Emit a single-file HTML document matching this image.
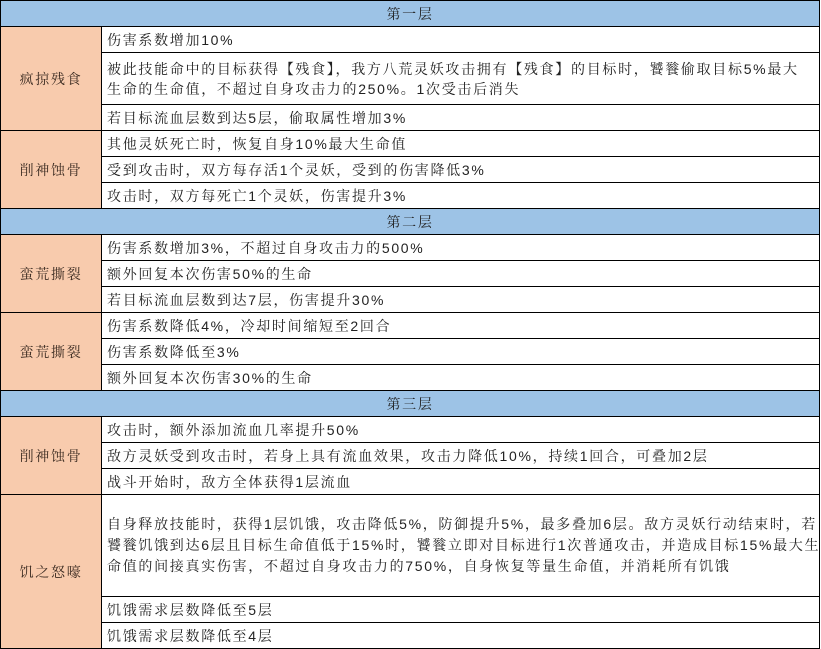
<!DOCTYPE html>
<html><head><meta charset="utf-8"><style>
body{margin:0;background:#fff;width:821px;height:649px;overflow:hidden;}
#t{position:absolute;left:0;top:0;}
.c{position:absolute;box-sizing:border-box;border:1px solid #000;font-family:"Liberation Sans","Noto Serif CJK SC","Noto Sans CJK SC",serif;font-size:14px;color:#222;letter-spacing:1.7px;line-height:20px;display:flex;align-items:center;white-space:nowrap;}
.c span.n{letter-spacing:0;}
.h{background:#9dc3e6;justify-content:center;}
.l{background:#f8cbad;justify-content:center;color:#3a2a20;}
.r{background:#fff;padding-left:5px;}
</style></head><body><div id="t">
<div class="c h" style="left:0;top:0;width:820px;height:27px">第一层</div>
<div class="c l" style="left:0;top:26px;width:102px;height:105px">疯掠残食</div>
<div class="c r" style="left:101px;top:26px;width:719px;height:27px">伤害系数增加10%</div>
<div class="c r" style="left:101px;top:52px;width:719px;height:53px"><div>被此技能命中的目标获得【残食】，我方八荒灵妖攻击拥有【残食】的目标时，饕餮偷取目标5%最大<br>生命的生命值，不超过自身攻击力的250%。1次受击后消失</div></div>
<div class="c r" style="left:101px;top:104px;width:719px;height:27px">若目标流血层数到达5层，偷取属性增加3%</div>
<div class="c l" style="left:0;top:130px;width:102px;height:79px">削神蚀骨</div>
<div class="c r" style="left:101px;top:130px;width:719px;height:27px">其他灵妖死亡时，恢复自身10%最大生命值</div>
<div class="c r" style="left:101px;top:156px;width:719px;height:27px">受到攻击时，双方每存活1个灵妖，受到的伤害降低3%</div>
<div class="c r" style="left:101px;top:182px;width:719px;height:27px">攻击时，双方每死亡1个灵妖，伤害提升3%</div>
<div class="c h" style="left:0;top:208px;width:820px;height:27px">第二层</div>
<div class="c l" style="left:0;top:234px;width:102px;height:79px">蛮荒撕裂</div>
<div class="c r" style="left:101px;top:234px;width:719px;height:27px">伤害系数增加3%，不超过自身攻击力的500%</div>
<div class="c r" style="left:101px;top:260px;width:719px;height:27px">额外回复本次伤害50%的生命</div>
<div class="c r" style="left:101px;top:286px;width:719px;height:27px">若目标流血层数到达7层，伤害提升30%</div>
<div class="c l" style="left:0;top:312px;width:102px;height:79px">蛮荒撕裂</div>
<div class="c r" style="left:101px;top:312px;width:719px;height:27px">伤害系数降低4%，冷却时间缩短至2回合</div>
<div class="c r" style="left:101px;top:338px;width:719px;height:27px">伤害系数降低至3%</div>
<div class="c r" style="left:101px;top:364px;width:719px;height:27px">额外回复本次伤害30%的生命</div>
<div class="c h" style="left:0;top:390px;width:820px;height:27px">第三层</div>
<div class="c l" style="left:0;top:416px;width:102px;height:79px">削神蚀骨</div>
<div class="c r" style="left:101px;top:416px;width:719px;height:27px">攻击时，额外添加流血几率提升50%</div>
<div class="c r" style="left:101px;top:442px;width:719px;height:27px">敌方灵妖受到攻击时，若身上具有流血效果，攻击力降低10%，持续1回合，可叠加2层</div>
<div class="c r" style="left:101px;top:468px;width:719px;height:27px">战斗开始时，敌方全体获得1层流血</div>
<div class="c l" style="left:0;top:494px;width:102px;height:155px">饥之怒嚎</div>
<div class="c r" style="left:101px;top:494px;width:719px;height:103px;line-height:21px"><div>自身释放技能时，获得1层饥饿，攻击降低5%，防御提升5%，最多叠加6层。敌方灵妖行动结束时，若<br>饕餮饥饿到达6层且目标生命值低于15%时，饕餮立即对目标进行1次普通攻击，并造成目标15%最大生<br>命值的间接真实伤害，不超过自身攻击力的750%，自身恢复等量生命值，并消耗所有饥饿</div></div>
<div class="c r" style="left:101px;top:596px;width:719px;height:27px">饥饿需求层数降低至5层</div>
<div class="c r" style="left:101px;top:622px;width:719px;height:27px">饥饿需求层数降低至4层</div>
</div></body></html>
